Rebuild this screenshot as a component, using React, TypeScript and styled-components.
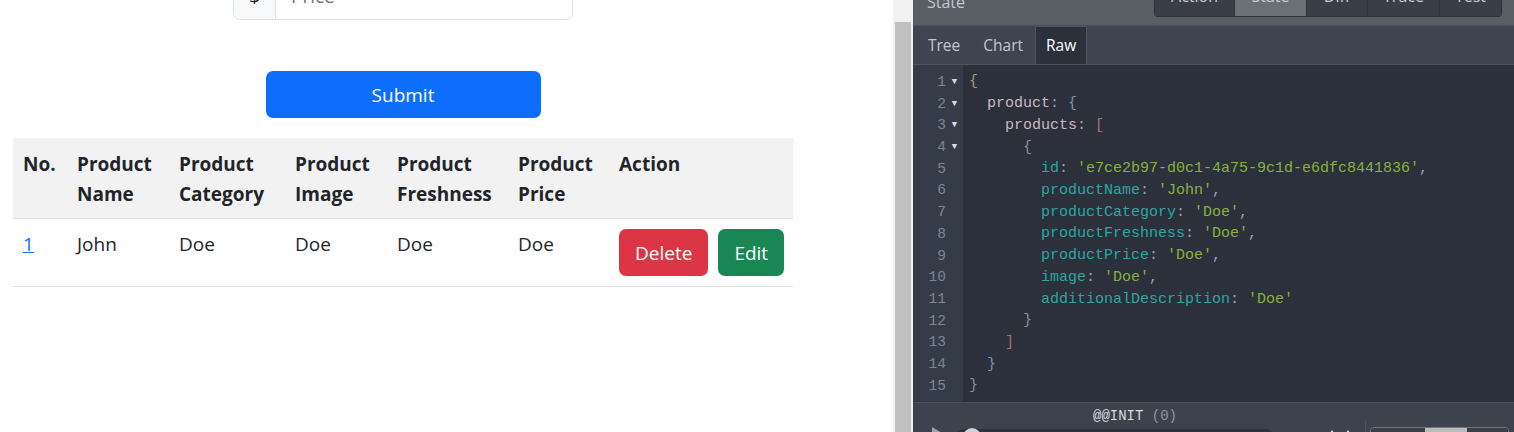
import React from 'react';
import styled, { createGlobalStyle } from 'styled-components';

const Global = createGlobalStyle`
  html, body { margin: 0; padding: 0; width: 1514px; height: 432px; overflow: hidden; background: #fff; }
  #root { width: 1514px; height: 432px; }
  * { box-sizing: border-box; }
`;

const Shell = styled.div`
  display: flex;
  width: 1514px;
  height: 432px;
  overflow: hidden;
`;

/* ---------- left page ---------- */
const Page = styled.main`
  width: 893px;
  flex: none;
  height: 432px;
  overflow: hidden;
  background: #fff;
  font-family: "Open Sans", "Noto Sans", sans-serif;
  font-size: 19px;
  line-height: 30px;
  color: #212529;
`;

const Content = styled.div`
  width: 780px;
  margin: -28px 0 0 13px;
  display: flex;
  flex-direction: column;
  align-items: center;
`;

const InputGroup = styled.div`
  width: 340px;
  height: 48px;
  display: flex;
  border: 1px solid #dee2e6;
  border-radius: 7px;
  overflow: hidden;
`;

const Addon = styled.span`
  width: 42px;
  flex: none;
  display: flex;
  align-items: center;
  justify-content: center;
  background: #f8f9fa;
  border-right: 1px solid #dee2e6;
  color: #212529;
`;

const Field = styled.span`
  flex: 1;
  display: flex;
  align-items: center;
  padding: 0 15px;
  color: #6c757d;
`;

const SubmitButton = styled.button`
  margin-top: 51px;
  width: 275px;
  height: 47px;
  border: none;
  border-radius: 7px;
  background: #0d6efd;
  color: #fff;
  font: inherit;
  cursor: pointer;
`;

const Table = styled.table`
  margin-top: 20px;
  width: 780px;
  border-collapse: collapse;
  table-layout: fixed;
`;

const Th = styled.th`
  background: #f2f2f2;
  font-weight: 700;
  text-align: left;
  vertical-align: top;
  padding: 11px 10px 9px;
  border-bottom: 1px solid #dee2e6;
  line-height: 30px;
`;

const Td = styled.td`
  text-align: left;
  vertical-align: top;
  padding: 10px;
  border-bottom: 1px solid #dee2e6;
  line-height: 30px;
`;

const Link = styled.a`
  color: #0d6efd;
  text-decoration: underline;
`;

const Actions = styled.div`
  display: flex;
  gap: 10px;
`;

const ActionButton = styled.button<{ $tone: 'danger' | 'success' }>`
  height: 47px;
  padding: 0 16px;
  border: none;
  border-radius: 7px;
  font: inherit;
  color: #fff;
  background: ${p => (p.$tone === 'danger' ? '#dc3545' : '#198754')};
`;

const Scrollbar = styled.div`
  width: 20px;
  flex: none;
  background: #f1f1f1;
  padding: 22px 2px 0 2px;
`;

const Thumb = styled.div`
  height: 100%;
  background: #c1c1c1;
`;

/* ---------- devtools ---------- */
const Devtools = styled.section`
  flex: 1;
  display: flex;
  flex-direction: column;
  background: #2b303b;
  font-family: "Open Sans", "Noto Sans", sans-serif;
  color: #c5c9cf;
  overflow: hidden;
`;

const TopBar = styled.div`
  height: 26px;
  flex: none;
  display: flex;
  justify-content: space-between;
  align-items: flex-end;
  background: #595e65;
  border-bottom: 1px solid #4b5058;
  padding: 0 12px 8px 14px;
`;

const TopLabel = styled.span`
  font-size: 16px;
  line-height: 20px;
  margin-bottom: 5px;
  color: #c3c6cb;
`;

const ModeGroup = styled.div`
  display: flex;
  height: 30px;
  border: 1px solid #2f333a;
  border-top: none;
  border-radius: 0 0 4px 4px;
  overflow: hidden;
`;

const ModeButton = styled.span<{ $w: number; $active?: boolean }>`
  width: ${p => p.$w}px;
  display: flex;
  align-items: flex-end;
  justify-content: center;
  padding-bottom: 10px;
  font-size: 16px;
  line-height: 20px;
  color: #c9ccd1;
  background: ${p => (p.$active ? '#6b6f76' : '#3a3e46')};
  & + & { border-left: 1px solid #2f333a; }
`;

const Tabs = styled.div`
  height: 39px;
  flex: none;
  display: flex;
  gap: 1px;
  padding-left: 4px;
  background: #3e4450;
  border-bottom: 1px solid #4e545e;
`;

const Tab = styled.span<{ $active?: boolean }>`
  display: flex;
  align-items: center;
  padding: 0 10px 2px;
  font-size: 15.5px;
  color: ${p => (p.$active ? '#ffffff' : '#c3c7cd')};
  background: ${p => (p.$active ? '#2b303b' : 'transparent')};
  border: 1px solid ${p => (p.$active ? '#4f5561' : 'transparent')};
  border-bottom: none;
`;

const Editor = styled.div`
  flex: 1;
  display: flex;
  min-height: 0;
  font-family: "Liberation Mono", "DejaVu Sans Mono", monospace;
`;

const Gutter = styled.div`
  width: 50px;
  flex: none;
  background: #363c47;
  padding-top: 6px;
`;

const GutterLine = styled.div`
  height: 21.72px;
  display: flex;
  align-items: center;
  font-size: 14.5px;
  color: #7d8590;
`;

const LineNo = styled.span`
  width: 33px;
  text-align: right;
`;

const Fold = styled.span`
  width: 17px;
  text-align: center;
  font-size: 9px;
  color: #d6d9de;
`;

const Code = styled.div`
  flex: 1;
  padding: 6px 0 0 6px;
`;

const CodeLine = styled.div<{ $indent: number }>`
  height: 21.72px;
  display: flex;
  align-items: center;
  padding-left: ${p => p.$indent * 18}px;
  font-size: 15px;
  white-space: pre;
`;

const tokenColors: Record<string, string> = {
  b1: '#a69b73',
  b2: '#8592aa',
  b3: '#a7716c',
  b4: '#8a9099',
  k0: '#cbb6bf',
  k: '#2ba7a0',
  s: '#87b03d',
  p: '#9aa1ab',
};

const Tok = styled.span<{ $c: string }>`
  color: ${p => tokenColors[p.$c]};
`;

const BottomBar = styled.div`
  height: 30px;
  flex: none;
  display: flex;
  background: #3d434d;
  border-top: 1px solid #4a505b;
`;

const Player = styled.div`
  width: 452px;
  flex: none;
  display: flex;
  flex-direction: column;
`;

const ActionLabel = styled.div`
  margin-top: 3px;
  height: 20px;
  line-height: 20px;
  text-align: center;
  padding-right: 8px;
  font-family: "Liberation Mono", "DejaVu Sans Mono", monospace;
  font-size: 14px;
  color: #d7dade;
`;

const Counter = styled.span`
  color: #8d939c;
`;

const SliderRow = styled.div`
  display: flex;
  align-items: flex-start;
  padding-left: 18px;
  gap: 14px;
`;

const Track = styled.div`
  width: 316px;
  height: 14px;
  margin-top: 3px;
  border-radius: 7px;
  background: #2c313b;
  padding-left: 6px;
`;

const Knob = styled.div`
  width: 18px;
  height: 18px;
  margin-top: -1px;
  border-radius: 50%;
  background: #cfd2d6;
`;

const StepArrows = styled.div`
  display: flex;
  gap: 6px;
  margin: 3px 0 0 40px;
`;

const RightControls = styled.div`
  flex: 1;
  border-left: 1px solid #4d535d;
  margin-top: 17px;
  padding: 7px 6px 0 4px;
`;

const Segmented = styled.div`
  display: flex;
  height: 20px;
  border: 1px solid #6f747b;
  border-radius: 4px;
  overflow: hidden;
`;

const Segment = styled.div<{ $w: number; $active?: boolean }>`
  width: ${p => p.$w}px;
  background: ${p => (p.$active ? '#bcbcbc' : '#3a3f48')};
`;

type Line = { indent: number; fold?: boolean; tokens: [string, string][] };

const lines: Line[] = [
  { indent: 0, fold: true, tokens: [['b1', '{']] },
  { indent: 1, fold: true, tokens: [['k0', 'product'], ['p', ': '], ['b2', '{']] },
  { indent: 2, fold: true, tokens: [['k0', 'products'], ['p', ': '], ['b3', '[']] },
  { indent: 3, fold: true, tokens: [['b4', '{']] },
  { indent: 4, tokens: [['k', 'id'], ['p', ': '], ['s', "'e7ce2b97-d0c1-4a75-9c1d-e6dfc8441836'"], ['p', ',']] },
  { indent: 4, tokens: [['k', 'productName'], ['p', ': '], ['s', "'John'"], ['p', ',']] },
  { indent: 4, tokens: [['k', 'productCategory'], ['p', ': '], ['s', "'Doe'"], ['p', ',']] },
  { indent: 4, tokens: [['k', 'productFreshness'], ['p', ': '], ['s', "'Doe'"], ['p', ',']] },
  { indent: 4, tokens: [['k', 'productPrice'], ['p', ': '], ['s', "'Doe'"], ['p', ',']] },
  { indent: 4, tokens: [['k', 'image'], ['p', ': '], ['s', "'Doe'"], ['p', ',']] },
  { indent: 4, tokens: [['k', 'additionalDescription'], ['p', ': '], ['s', "'Doe'"]] },
  { indent: 3, tokens: [['b4', '}']] },
  { indent: 2, tokens: [['b3', ']']] },
  { indent: 1, tokens: [['b2', '}']] },
  { indent: 0, tokens: [['b4', '}']] },
];

const columns = [
  { w: 54, label: ['No.'] },
  { w: 102, label: ['Product', 'Name'] },
  { w: 116, label: ['Product', 'Category'] },
  { w: 102, label: ['Product', 'Image'] },
  { w: 121, label: ['Product', 'Freshness'] },
  { w: 101, label: ['Product', 'Price'] },
  { w: 184, label: ['Action'] },
];

const modes = [
  { label: 'Action', w: 79 },
  { label: 'State', w: 72, active: true },
  { label: 'Diff', w: 61 },
  { label: 'Trace', w: 72 },
  { label: 'Test', w: 62 },
];

export default function App() {
  return (
    <>
      <Global />
      <Shell>
        <Page>
          <Content>
            <InputGroup>
              <Addon>$</Addon>
              <Field>Price</Field>
            </InputGroup>
            <SubmitButton>Submit</SubmitButton>
            <Table>
              <colgroup>
                {columns.map((c, i) => (
                  <col key={i} style={{ width: c.w }} />
                ))}
              </colgroup>
              <thead>
                <tr>
                  {columns.map((c, i) => (
                    <Th key={i}>
                      {c.label.map((l, j) => (
                        <div key={j}>{l}</div>
                      ))}
                    </Th>
                  ))}
                </tr>
              </thead>
              <tbody>
                <tr>
                  <Td>
                    <Link href="#">1</Link>
                  </Td>
                  <Td>John</Td>
                  <Td>Doe</Td>
                  <Td>Doe</Td>
                  <Td>Doe</Td>
                  <Td>Doe</Td>
                  <Td>
                    <Actions>
                      <ActionButton $tone="danger">Delete</ActionButton>
                      <ActionButton $tone="success">Edit</ActionButton>
                    </Actions>
                  </Td>
                </tr>
              </tbody>
            </Table>
          </Content>
        </Page>
        <Scrollbar>
          <Thumb />
        </Scrollbar>
        <Devtools>
          <TopBar>
            <TopLabel>State</TopLabel>
            <ModeGroup>
              {modes.map(m => (
                <ModeButton key={m.label} $w={m.w} $active={m.active}>
                  {m.label}
                </ModeButton>
              ))}
            </ModeGroup>
          </TopBar>
          <Tabs>
            <Tab>Tree</Tab>
            <Tab>Chart</Tab>
            <Tab $active>Raw</Tab>
          </Tabs>
          <Editor>
            <Gutter>
              {lines.map((l, i) => (
                <GutterLine key={i}>
                  <LineNo>{i + 1}</LineNo>
                  <Fold>{l.fold ? '▼' : ''}</Fold>
                </GutterLine>
              ))}
            </Gutter>
            <Code>
              {lines.map((l, i) => (
                <CodeLine key={i} $indent={l.indent}>
                  {l.tokens.map(([c, t], j) => (
                    <Tok key={j} $c={c}>
                      {t}
                    </Tok>
                  ))}
                </CodeLine>
              ))}
            </Code>
          </Editor>
          <BottomBar>
            <Player>
              <ActionLabel>
                @@INIT <Counter>(0)</Counter>
              </ActionLabel>
              <SliderRow>
                <svg width="12" height="14" viewBox="0 0 12 14">
                  <path d="M1 1 L11 7 L1 13 Z" fill="#9ea3ab" />
                </svg>
                <Track>
                  <Knob />
                </Track>
                <StepArrows>
                  <svg width="10" height="8" viewBox="0 0 10 8">
                    <path d="M5 1 L9 7 L1 7 Z" fill="#e3e5e8" />
                  </svg>
                  <svg width="10" height="8" viewBox="0 0 10 8">
                    <path d="M5 1 L9 7 L1 7 Z" fill="#e3e5e8" />
                  </svg>
                </StepArrows>
              </SliderRow>
            </Player>
            <RightControls>
              <Segmented>
                <Segment $w={54} />
                <Segment $w={42} $active />
                <Segment $w={41} />
              </Segmented>
            </RightControls>
          </BottomBar>
        </Devtools>
      </Shell>
    </>
  );
}
